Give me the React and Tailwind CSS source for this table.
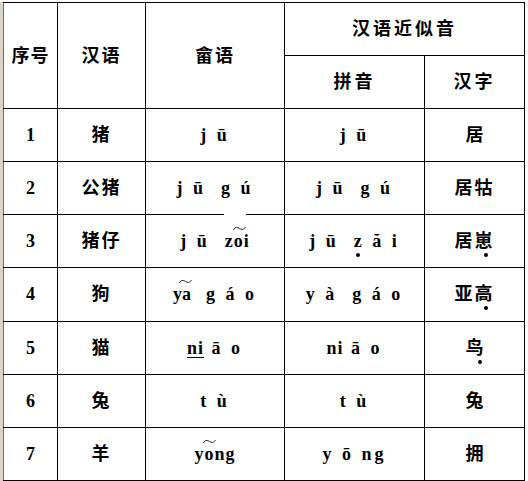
import React from "react";

const font = "font-['Liberation_Serif','Noto_Sans_CJK_SC',serif]";

const Tilde = ({ className }) => (
  <svg
    className={`absolute ${className}`}
    width="13"
    height="5"
    viewBox="0 0 13 5"
  >
    <path
      d="M0.5 4 C2 1 4 0.8 6.5 2.5 C9 4 10.5 3.8 12.5 1.2"
      stroke="black"
      strokeWidth="0.9"
      fill="none"
    />
  </svg>
);

const Dot = ({ className }) => (
  <span
    className={`absolute w-[4px] h-[4px] rounded-full bg-black ${className}`}
  />
);

const rows = [
  {
    no: "1",
    han: "猪",
    she: <span className="tracking-[3px]">j ū</span>,
    pin: <span className="tracking-[3px]">j ū</span>,
    zi: <span>居</span>,
  },
  {
    no: "2",
    han: "公猪",
    she: <span className="tracking-[3px]">j ū&nbsp; g ú</span>,
    pin: <span className="tracking-[3px]">j ū&nbsp; g ú</span>,
    zi: <span className="tracking-[2px]">居牯</span>,
  },
  {
    no: "3",
    han: "猪仔",
    she: (
      <span>
        <span className="tracking-[3px]">j ū&nbsp; </span>
        <span className="tracking-[1px]">
          z
          <span className="relative">
            o
            <Tilde className="left-[-1px] top-[-5px]" />
          </span>
          i
        </span>
      </span>
    ),
    pin: (
      <span className="tracking-[3px]">
        j ū&nbsp;{" "}
        <span className="relative">
          z<Dot className="left-[2px] bottom-[-6px]" />
        </span>{" "}
        ă i
      </span>
    ),
    zi: (
      <span className="tracking-[2px]">
        居
        <span className="relative">
          崽<Dot className="left-[9px] bottom-[-6px]" />
        </span>
      </span>
    ),
    gap: true,
  },
  {
    no: "4",
    han: "狗",
    she: (
      <span>
        <span className="relative tracking-[0px]">
          ya
          <Tilde className="left-[6px] top-[-5px]" />
        </span>
        <span className="tracking-[3px]">&nbsp; g á o</span>
      </span>
    ),
    pin: <span className="tracking-[3px]">y à&nbsp; g á o</span>,
    zi: (
      <span className="tracking-[2px]">
        亚
        <span className="relative">
          高<Dot className="left-[9px] bottom-[-6px]" />
        </span>
      </span>
    ),
  },
  {
    no: "5",
    han: "猫",
    she: (
      <span>
        <span className="underline underline-offset-[3px] decoration-1 tracking-[1px]">ni</span>
        <span className="tracking-[3px]"> ā o</span>
      </span>
    ),
    pin: (
      <span>
        <span className="tracking-[1px]">ni</span>
        <span className="tracking-[3px]"> ā o</span>
      </span>
    ),
    zi: (
      <span className="relative">
        鸟<Dot className="left-[12px] bottom-[-6px]" />
      </span>
    ),
  },
  {
    no: "6",
    han: "兔",
    she: <span className="tracking-[3px]">t ù</span>,
    pin: <span className="tracking-[3px]">t ù</span>,
    zi: <span>兔</span>,
  },
  {
    no: "7",
    han: "羊",
    she: (
      <span className="tracking-[1px]">
        y
        <span className="relative">
          o
          <Tilde className="left-[-1px] top-[-5px]" />
        </span>
        ng
      </span>
    ),
    pin: <span className="tracking-[3px]">y ō ng</span>,
    zi: <span>拥</span>,
  },
];

const cell = "border border-black text-center align-middle p-0";

export default function App() {
  return (
    <div className={`flex w-[528px] h-[481px] bg-white pt-[2px] text-black ${font}`}>
      <div className="w-[3px] h-full bg-[#d8d4c8]" />
      <table className="table-fixed border-collapse w-[521px] font-bold text-[18px] leading-none">
        <colgroup>
          <col className="w-[54px]" />
          <col className="w-[88px]" />
          <col className="w-[139px]" />
          <col className="w-[140px]" />
          <col className="w-[100px]" />
        </colgroup>
        <thead>
          <tr className="h-[53px]">
            <th rowSpan={2} className={`${cell} border-l-[#6b6b6b]`}>
              <span className="tracking-[1px]">序号</span>
            </th>
            <th rowSpan={2} className={cell}>
              <span className="tracking-[2px]">汉语</span>
            </th>
            <th rowSpan={2} className={cell}>
              <span className="tracking-[2px]">畲语</span>
            </th>
            <th colSpan={2} className={cell}>
              <span className="tracking-[3px]">汉语近似音</span>
            </th>
          </tr>
          <tr className="h-[53px]">
            <th className={cell}>
              <span className="tracking-[3px]">拼音</span>
            </th>
            <th className={cell}>
              <span className="tracking-[3px]">汉字</span>
            </th>
          </tr>
        </thead>
        <tbody>
          {rows.map((r) => (
            <tr key={r.no} className="h-[53px]">
              <td className={`${cell} border-l-[#6b6b6b]`}>{r.no}</td>
              <td className={cell}>
                <span className="tracking-[2px]">{r.han}</span>
              </td>
              <td className={`${cell} relative`}>
                {r.gap && (
                  <span className="absolute left-[78px] top-[-2px] w-[22px] h-[3px] bg-white" />
                )}
                {r.she}
              </td>
              <td className={cell}>{r.pin}</td>
              <td className={cell}>{r.zi}</td>
            </tr>
          ))}
        </tbody>
      </table>
    </div>
  );
}
